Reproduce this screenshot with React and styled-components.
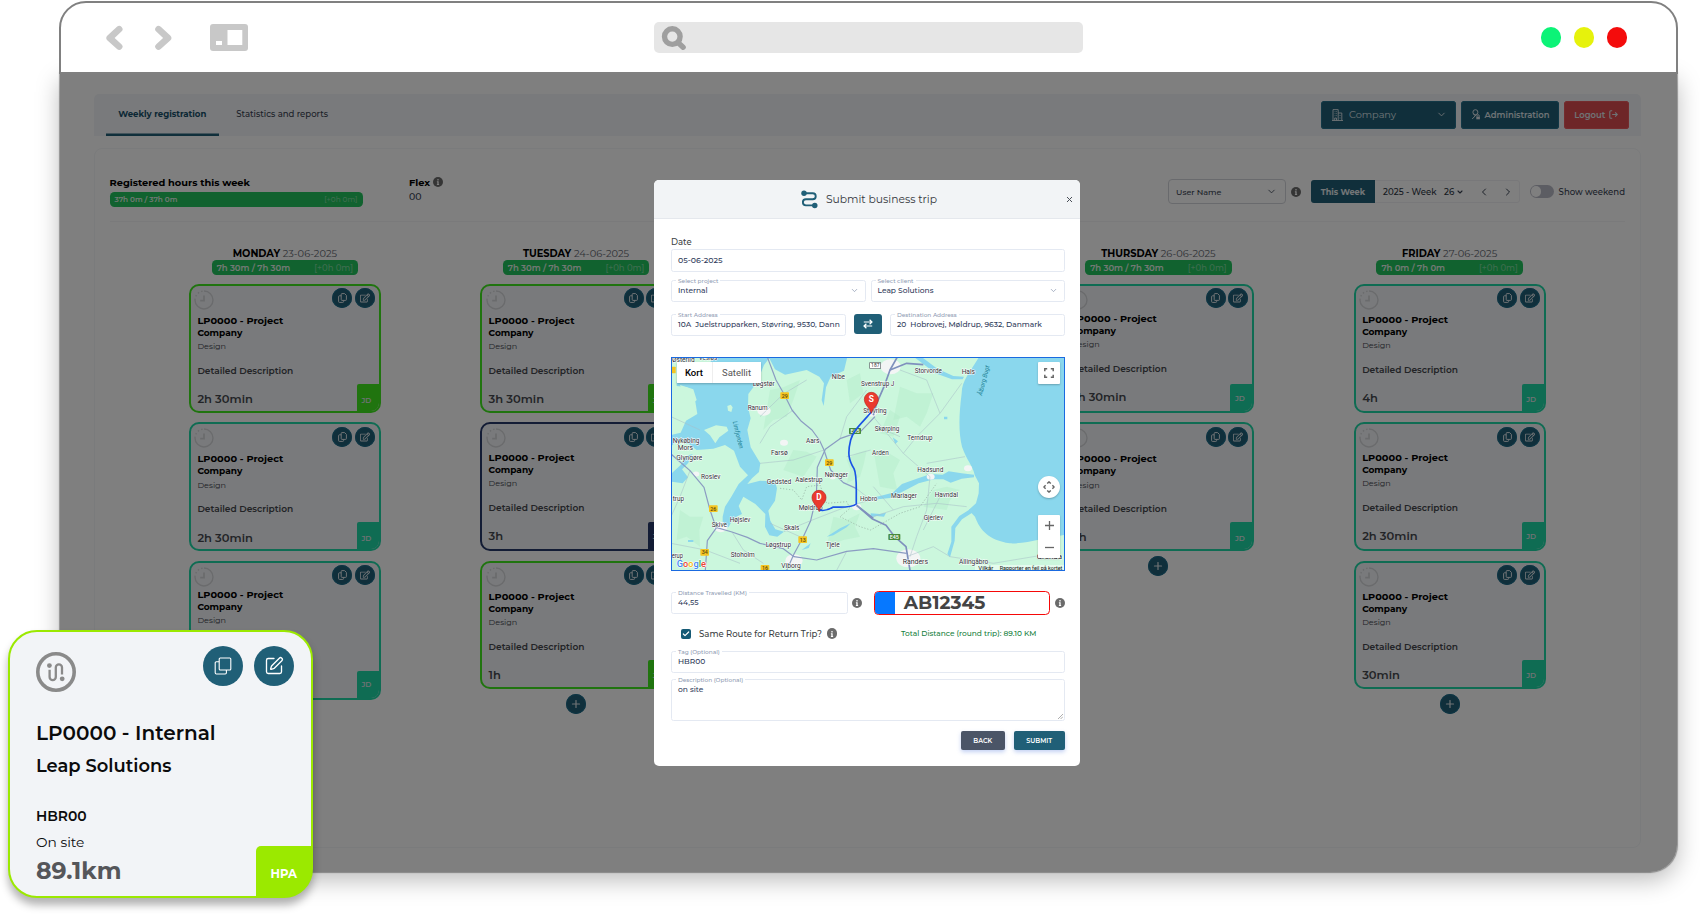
import React from 'react';
import styled, { createGlobalStyle, css } from 'styled-components';
import { FaRegEdit, FaInfo } from 'react-icons/fa';
import { ChevronDown, ChevronLeft, ChevronRight, Plus, SquarePen, Check } from 'lucide-react';

const teal = '#205f77';
const ink = '#3c3f44';

const GlobalStyle = createGlobalStyle`
  *, *::before, *::after { box-sizing: border-box; }
  body { margin: 0; background: #fff; font-family: Montserrat, Inter, "Open Sans", sans-serif; font-weight: 500; }
  svg { display: block; flex: none; }
`;

const Page = styled.main`
  position: relative;
  width: 1700px;
  height: 914px;
  overflow: hidden;
  padding: 1px 0 0 59px;
  white-space: nowrap;
`;

/* ---------- browser window ---------- */

const TitleBar = styled.header`
  position: relative;
  z-index: 1;
  width: 1619px;
  height: 73px;
  border: 2px solid #808080;
  border-radius: 27px 27px 0 0;
  background: #fff;
  display: grid;
  grid-template-columns: 593px 429px 1fr;
  align-items: center;
  padding-bottom: 0;
`;

const BrowserNav = styled.div`
  display: flex;
  align-items: center;
  padding-left: 45px;
`;

const SearchBar = styled.div`
  height: 31px;
  border-radius: 5px;
  background: #e6e6e6;
  display: flex;
  align-items: center;
  padding-left: 7px;
`;

const Dots = styled.div`
  display: flex;
  justify-content: flex-end;
  gap: 12.6px;
  padding-right: 49.3px;
`;

const Dot = styled.i`
  width: 20.2px;
  height: 20.2px;
  border-radius: 50%;
  background: ${p => p.$color};
`;

const Body = styled.section`
  position: relative;
  width: 1617px;
  height: 799px;
  margin-left: 1px;
  margin-top: -1px;
  padding: 21px 36.5px 0 34px;
  border-radius: 0 0 27px 27px;
  background: #fff;
  box-shadow: 0 8px 24px rgba(0, 0, 0, 0.27), 0 0 1px 1px rgba(130, 130, 130, 0.7);
`;

const Backdrop = styled.div`
  position: absolute;
  inset: 0;
  border-radius: inherit;
  background: rgba(0, 0, 0, 0.5);
`;

/* ---------- application ---------- */

const AppBar = styled.nav`
  height: 42px;
  background: #f3f5f8;
  border-radius: 5px 5px 0 0;
  display: flex;
  align-items: center;
  padding: 0 12px;
`;

const Tab = styled.a`
  height: 100%;
  display: flex;
  align-items: center;
  padding: 0 12.2px 3px;
  margin-right: 5.5px;
  font-size: 8.55px;
  font-weight: ${p => (p.$active ? 700 : 500)};
  color: ${p => (p.$active ? '#17506a' : '#374151')};
  box-shadow: ${p => (p.$active ? `inset 0 -2.5px 0 ${teal}` : 'none')};
`;

const AppButtons = styled.div`
  margin-left: auto;
  display: flex;
  gap: 5px;
`;

const AppButton = styled.button`
  width: ${p => p.$w}px;
  height: 28px;
  border: 0;
  border-radius: 3.5px;
  background: ${p => (p.$danger ? '#dd4c50' : teal)};
  box-shadow: inset 0 0 0 1px ${p => (p.$danger ? '#e8585c' : '#24708c')};
  color: #dfe5ea;
  font-family: inherit;
  font-size: ${p => (p.$large ? 9.73 : 8.42)}px;
  font-weight: ${p => (p.$large ? 450 : 600)};
  display: flex;
  align-items: center;
  justify-content: ${p => (p.$large ? 'flex-start' : 'center')};
  gap: ${p => (p.$large ? 6.5 : 4)}px;
  padding: 0 ${p => (p.$large ? 9.5 : 0)}px 1px ${p => (p.$large ? 11 : 0)}px;
  & > svg:last-child { margin-left: ${p => (p.$large ? 'auto' : 0)}; }
`;

const Panel = styled.div`
  height: 700px;
  margin-top: 12px;
  border: 1px solid #f5f6f8;
  border-radius: 8px;
  padding: 0 14.5px;
`;

const Summary = styled.div`
  height: 73px;
  border-bottom: 1px solid #f4f5f7;
  display: flex;
  align-items: flex-start;
`;

const Stat = styled.div`
  width: ${p => p.$w}px;
  padding-top: 26.7px;
`;

const StatTitle = styled.h3`
  margin: 0;
  height: 13px;
  font-size: 9.8px;
  line-height: 13px;
  font-weight: 700;
  color: #000;
  display: flex;
  align-items: center;
  gap: 3px;
`;

const StatValue = styled.div`
  font-size: 9.4px;
  line-height: 14px;
  margin-top: 1.5px;
  color: #374151;
`;

const HoursPill = styled.div`
  width: ${p => p.$w}px;
  height: 14.7px;
  margin-top: ${p => p.$top}px;
  padding: 0 5px;
  border-radius: 4.5px;
  background: #22c55e;
  font-size: ${p => p.$size}px;
  font-weight: 600;
  color: #e6f3ea;
  display: flex;
  align-items: center;
  justify-content: space-between;
`;

const PillDelta = styled.span`
  font-weight: 500;
  color: #7ddb9e;
`;

const InfoDot = styled.span`
  width: ${p => p.$s || 10}px;
  height: ${p => p.$s || 10}px;
  border-radius: 50%;
  background: #6b6b6b;
  color: #fff;
  display: flex;
  align-items: center;
  justify-content: center;
  flex: none;
`;

const Controls = styled.div`
  margin-left: auto;
  height: 24px;
  margin-top: 30.7px;
  display: flex;
  align-items: center;
`;

const UserSelect = styled.div`
  width: 118px;
  height: 25px;
  border: 1px solid #d3d5da;
  border-radius: 4px;
  padding: 0 8px 0 7px;
  font-size: 8.03px;
  color: #374151;
  display: flex;
  align-items: center;
  justify-content: space-between;
  margin-right: 4.5px;
`;

const WeekPicker = styled.div`
  width: 209.5px;
  height: 23.5px;
  margin: 0 9.5px 0 10px;
  border: 1px solid #f0f1f4;
  border-radius: 3px;
  display: flex;
  align-items: center;
  font-size: 8.6px;
  color: #2b3441;
  & > svg { color: #374151; }
`;

const ThisWeek = styled.b`
  width: 64.5px;
  height: 23.5px;
  margin-left: -1px;
  border-radius: 3px 0 0 3px;
  background: ${teal};
  color: #e6ebee;
  font-size: 8.17px;
  display: flex;
  align-items: center;
  justify-content: center;
`;

const WeekText = styled.span`
  margin-left: ${p => p.$gap}px;
`;

const Toggle = styled.span`
  width: 24.5px;
  height: 12.4px;
  border-radius: 7px;
  background: #b9bac6;
  padding: 1px;
  margin-right: 4.5px;
  &::after {
    content: '';
    display: block;
    width: 10.4px;
    height: 10.4px;
    border-radius: 50%;
    background: #fff;
  }
`;

const ToggleLabel = styled.span`
  font-size: 8.56px;
  color: #374151;
`;

const Week = styled.div`
  display: grid;
  grid-template-columns: repeat(5, 291.2px);
  justify-content: center;
  padding-top: 23.6px;
`;

const Day = styled.section`
  display: flex;
  flex-direction: column;
  align-items: center;
`;

const DayTitle = styled.h4`
  margin: 0;
  font-size: 9.85px;
  line-height: 14px;
  font-weight: 400;
  color: #62666e;
  b { color: #000; font-weight: 700; }
`;

const Cards = styled.div`
  margin-top: 9px;
  display: flex;
  flex-direction: column;
  align-items: center;
  gap: 9.8px;
`;

const Card = styled.article`
  position: relative;
  width: 192px;
  height: ${p => (p.$tall ? 138.9 : 128.6)}px;
  border: 2px solid ${p => p.$color};
  border-radius: 10px;
  background: #f3f5f8;
  overflow: hidden;
  padding: 1.5px 4px 0 3.5px;
`;

const CardTop = styled.div`
  height: 22px;
  display: flex;
  align-items: center;
  & > svg { margin: 3px auto 0 0; }
`;

const RoundButton = styled.span`
  width: 20px;
  height: 20px;
  margin-left: 2.5px;
  border-radius: 50%;
  background: ${teal};
  box-shadow: inset 0 0 0 1px #1d6d8b;
  color: #e0e6ea;
  display: flex;
  align-items: center;
  justify-content: center;
`;

const CardText = styled.div`
  padding-left: 3px;
  margin-top: ${p => 4.3 + p.$shift}px;
`;

const line = css`
  margin: 0;
  height: 12px;
  line-height: 12px;
`;
const CardTitle = styled.h5`${line} font-size: 9.8px; font-weight: 700; color: #000;`;
const CardClient = styled.div`${line} font-size: 9px; font-weight: 700; color: #000;`;
const CardTask = styled.div`${line} margin-top: 1.3px; font-size: 8.1px; font-weight: 400; color: #3f444c;`;
const CardNote = styled.div`${line} margin-top: 12.7px; font-size: 9.05px; font-weight: 600; color: #46494f;`;
const CardTime = styled.div`${line} margin-top: 16.1px; font-size: 11.5px; font-weight: 600; color: #46494f;`;

const CardTag = styled.span`
  position: absolute;
  right: -1px;
  bottom: -1px;
  width: 23px;
  height: 28px;
  border-radius: 2px 0 0 0;
  background: ${p => p.$color};
  color: #dfe5e8;
  font-size: 7.3px;
  font-weight: 600;
  line-height: 9px;
  text-align: center;
  padding: ${p => 11 + p.$shift}px 4px 0 0;
`;

const AddButton = styled(RoundButton)`
  margin: -5px 0 0;
`;

/* ---------- modal ---------- */

const Modal = styled.div`
  position: absolute;
  left: 594px;
  top: 107px;
  width: 426px;
  height: 586px;
  border-radius: 5px;
  background: #fff;
  overflow: hidden;
  color: ${ink};
`;

const ModalHeader = styled.header`
  height: 39px;
  background: #f2f4f6;
  border-bottom: 1px solid #e5e8ed;
  display: grid;
  grid-template-columns: 148px 1fr auto;
  align-items: center;
  padding: 0 7px 0 0;
  & > svg:first-child { justify-self: end; }
  h2 { margin: 0; padding-left: 24px; font-size: 10.75px; font-weight: 450; color: #34373c; }
`;

const ModalIcon = styled.svg`
  margin-right: -16px;
`;

const Form = styled.div`
  padding: 18px 15px 0 17px;
`;

const DateLabel = styled.label`
  display: block;
  font-size: 8.5px;
  line-height: 11px;
  margin-bottom: 1.3px;
`;

const FormRow = styled.div`
  display: flex;
  align-items: ${p => (p.$center ? 'center' : 'flex-start')};
  justify-content: space-between;
  margin-top: ${p => p.$top}px;
`;

const Field = styled.div`
  position: relative;
  width: ${p => (p.$w ? `${p.$w}px` : '100%')};
  height: ${p => p.$h || 22}px;
  border: 1px solid #e4e9f2;
  border-radius: 2.5px;
  padding: ${p => (p.$label ? 0 : 0.5)}px 6px 1px;
  font-size: ${p => p.$size || 7.5}px;
  line-height: 19.5px;
  color: #2e3a59;
  display: flex;
  align-items: ${p => (p.$area ? 'flex-start' : 'center')};
  justify-content: space-between;
  white-space: pre;
  & > svg { color: #8f9bb3; }
`;

const FieldLabel = styled.span`
  position: absolute;
  left: 4px;
  top: -4px;
  padding: 0 2px;
  background: #fff;
  font-size: 5.8px;
  line-height: 7px;
  color: #8f9bb3;
`;

const SwapButton = styled.span`
  width: 28px;
  height: 20px;
  border-radius: 3px;
  background: ${teal};
  color: #fff;
  display: flex;
  align-items: center;
  justify-content: center;
`;

const MapBox = styled.div`
  position: relative;
  width: 394px;
  height: 214px;
  margin-top: 20.7px;
  border: 1px solid #1a6ae0;
  overflow: hidden;
  font-family: Roboto, sans-serif;
  & > svg { margin: -1px; }
`;

const MapTypes = styled.div`
  position: absolute;
  left: 4.5px;
  top: 4px;
  height: 21px;
  width: 84px;
  background: #fff;
  box-shadow: 0 1px 2px rgba(0, 0, 0, 0.25);
  display: grid;
  grid-template-columns: 36px 1fr;
  align-items: center;
  text-align: center;
  font-size: 9.5px;
  font-weight: 400;
  color: #565656;
  b { font-weight: 500; color: #000; border-right: 1px solid #eee; line-height: 21px; }
`;

const MapButton = styled.div`
  position: absolute;
  left: 366px;
  top: ${p => p.$top}px;
  width: 22px;
  height: ${p => p.$h || 22}px;
  border-radius: ${p => (p.$round ? '50%' : '1px')};
  background: #fff;
  box-shadow: 0 1px 2px rgba(0, 0, 0, 0.25);
  color: #666;
  display: flex;
  flex-direction: column;
  align-items: center;
  justify-content: space-around;
`;

const PlateField = styled.div`
  width: 176px;
  height: 24.5px;
  border: 1.5px solid #f60808;
  border-radius: 4.5px;
  overflow: hidden;
  display: flex;
  align-items: center;
  font-size: 18.6px;
  font-weight: 700;
  line-height: 22px;
  color: #444;
  &::before { content: ''; width: 20.5px; height: 100%; background: #0678ff; margin-right: 8.7px; }
`;

const Gap = styled.span`
  flex: 0 0 ${p => p.$w}px;
`;

const CheckRow = styled.div`
  height: 12px;
  margin-top: 12.4px;
  display: flex;
  align-items: center;
  padding-left: 9.5px;
  font-size: 8.55px;
`;

const Checkbox = styled.span`
  width: 10px;
  height: 10px;
  margin-right: 8.5px;
  border-radius: 2px;
  background: #155a75;
  color: #fff;
  display: flex;
  align-items: center;
  justify-content: center;
`;

const Total = styled.span`
  margin-left: auto;
  margin-right: 28.5px;
  font-size: 7.46px;
  color: #15803d;
`;

const Actions = styled.div`
  display: flex;
  justify-content: flex-end;
  gap: 8.5px;
  margin-top: 10.2px;
`;

const Action = styled.button`
  width: ${p => p.$w}px;
  height: 19.3px;
  border: 0;
  border-radius: 2px;
  background: ${p => p.$bg};
  box-shadow: 0 2px 4px rgba(80, 120, 220, 0.35);
  color: #fff;
  font-family: inherit;
  font-size: 6.4px;
  font-weight: 600;
  padding: 0.6px 0 0;
`;

/* ---------- trip card ---------- */

const TripCard = styled.aside`
  position: absolute;
  z-index: 2;
  left: 8px;
  top: 630px;
  width: 305px;
  height: 268px;
  border: 2px solid #9be900;
  border-radius: 29px;
  background: #f2f4f7;
  box-shadow: 0 7px 8px rgba(0, 0, 0, 0.3);
  padding: 14px 17.5px 0 26px;
  color: #000;
`;

const TripTop = styled.div`
  height: 46px;
  display: flex;
  align-items: flex-start;
  gap: 10.5px;
  & > svg { margin: 5.5px auto 0 0; }
`;

const TripButton = styled.span`
  width: 40px;
  height: 40px;
  border-radius: 50%;
  background: ${teal};
  color: #fff;
  display: flex;
  align-items: center;
  justify-content: center;
`;

const TripLine = styled.div`
  margin-top: ${p => p.$top}px;
  height: 24px;
  line-height: 24px;
  font-size: ${p => p.$size}px;
  font-weight: ${p => p.$weight};
  color: ${p => p.$color || '#0b0b0c'};
`;

const TripTag = styled.span`
  position: absolute;
  right: -1px;
  bottom: -1px;
  width: 56.5px;
  height: 51px;
  border-radius: 5px 0 28px 0;
  background: #9be900;
  color: #fff;
  font-size: 11.7px;
  font-weight: 700;
  line-height: 14px;
  text-align: center;
  padding: 21px 0 0 0;
`;

/* ---------- drawings ---------- */

const ClockIcon = () => (
  <svg width="20" height="20" viewBox="0 0 20 20" fill="none" stroke="#d5d7da" strokeWidth="1.4">
    <path d="M10 1a9 9 0 1 1-9 9" />
    <path d="M1 10a9 9 0 0 1 9-9" strokeDasharray="1.5 2.2" />
    <path d="M10 5.5v5.2H6.2" strokeWidth="1.8" />
  </svg>
);

const CopyIcon = () => (
  <svg width="9" height="10" viewBox="0 0 9 10" fill="none" stroke="currentColor" strokeWidth="1">
    <path d="M4 .6h2.6L8.4 2.4v4.2q0 .8-.8.8H4q-.8 0-.8-.8V1.4Q3.2.6 4 .6Z" />
    <path d="M3.2 2.8H1.4q-.8 0-.8.8v5q0 .8.8.8h3.4q.8 0 .8-.8V7.4" />
  </svg>
);

const MagnifierIcon = () => (
  <svg width="26" height="26" viewBox="0 0 26 26" fill="none" stroke="#9f9f9f">
    <circle cx="11.3" cy="11.6" r="7.8" strokeWidth="5.4" />
    <path d="M17.5 18l4.6 4.2" strokeWidth="5.4" strokeLinecap="round" />
  </svg>
);

const NavArrow = ({ flip, gap }) => (
  <svg width={17 + gap} height="26" viewBox={`0 0 ${17 + gap} 26`} fill="none" stroke="#c8c8c8" strokeWidth="6.6" strokeLinecap="round" strokeLinejoin="round">
    <path d={flip ? 'M4.5 4.2L14 13L4.5 21.6' : 'M13.2 4.2L3.7 13L13.2 21.6'} />
  </svg>
);

const SidebarIcon = () => (
  <svg width="38" height="27" viewBox="0 0 38 27">
    <rect width="38" height="27" rx="3" fill="#c8c8c8" />
    <rect x="17.5" y="6" width="14.8" height="15" fill="#fff" />
    <rect x="6" y="17" width="6" height="4" fill="#fff" />
  </svg>
);

const BuildingIcon = () => (
  <svg width="11" height="12" viewBox="0 0 11 12" fill="none" stroke="currentColor" strokeWidth="0.9">
    <path d="M0 11.5h11M1 11.5V.6h5.2v10.9M6.2 4h3.6v7.5M2.7 2.6h.7M4 2.6h.7M2.7 4.6h.7M4 4.6h.7M2.7 6.6h.7M4 6.6h.7M2.7 11.5V9h1.8v2.5M8 6v1M8 8.5v1" />
  </svg>
);

const AdminIcon = () => (
  <svg width="10" height="11" viewBox="0 0 10 11" fill="none" stroke="currentColor" strokeWidth="1">
    <circle cx="4.4" cy="3.2" r="2.5" />
    <path d="M5.8 5.2L1.2 10M2.6 5.2l1.6 1.6M6 7.6V6.8a1.1 1.1 0 0 1 2.2 0v.8" />
    <rect x="5.3" y="7.6" width="3.6" height="2.7" fill="currentColor" stroke="none" />
  </svg>
);

const LogoutIcon = () => (
  <svg width="9" height="9" viewBox="0 0 9 9" fill="none" stroke="currentColor" strokeWidth="1.1">
    <path d="M3.2.8H1.8Q.8.8.8 1.8v5.4q0 1 1 1h1.4M3.2 4.5h5M6.2 2.4l2.1 2.1-2.1 2.1" />
  </svg>
);

const RouteIcon = () => (
  <ModalIcon width="17" height="19" viewBox="0 0 18 20" fill="none" stroke={teal} strokeWidth="2">
    <path d="M4 3.4h8.4a3.1 3.1 0 0 1 0 6.4H5.2a3.2 3.2 0 0 0 0 6.4H14" />
    <circle cx="3.2" cy="3.4" r="2.9" fill={teal} stroke="none" />
    <circle cx="14.6" cy="16.4" r="2.9" fill={teal} stroke="none" />
  </ModalIcon>
);

const SwapIcon = () => (
  <svg width="10" height="10" viewBox="0 0 10 10" fill="none" stroke="currentColor" strokeWidth="1.2">
    <path d="M.8 3h8M6.6.7L9 3 6.6 5.3M9.2 7h-8M3.4 4.7L1 7l2.4 2.3" />
  </svg>
);

const TripRouteIcon = () => (
  <svg width="40" height="40" viewBox="0 0 40 40" fill="none" stroke="#8a8a8a">
    <circle cx="20" cy="20" r="18.2" strokeWidth="3.6" />
    <path d="M13.6 17.8v7.2a3.1 3.1 0 0 0 6.2 0V15.4a3.1 3.1 0 0 1 6.2 0V22.4" strokeWidth="2.3" />
    <circle cx="13.4" cy="13.6" r="2.4" fill="#8a8a8a" stroke="none" />
    <circle cx="26.2" cy="26.8" r="2.4" fill="#8a8a8a" stroke="none" />
  </svg>
);

const TripCopyIcon = () => (
  <svg width="18" height="18" viewBox="0 0 18 18" fill="none" stroke="currentColor" strokeWidth="1.1">
    <rect x="5.2" y="1" width="11.6" height="12" rx="1" />
    <path d="M5.2 4.8H2.4Q1.2 4.8 1.2 6v9.8Q1.2 17 2.4 17h8.8q1.2 0 1.2-1.2V13" />
  </svg>
);

/* Map drawing units: three per pixel. */
const WATER = [
  'M155 21L312 21L326 21L345 58L375 74L440 60L478 80L492 100L485 150L491 168L498 112L512 80L552 62L562 21L330 21L312 45L300 75L285 105L265 132L264 172L272 205L262 240L272 292L301 340L297 366L276 385L262 402L300 392L345 395L351 415L345 452L325 482L331 512L346 538L372 545L352 560L328 556L315 530L316 492L286 462L250 440L236 468L246 492L220 505L206 531L188 536L188 500L195 470L214 440L236 402L264 376L240 350L222 302L195 285L160 296L110 300L86 282L50 272L33 290L33 255L62 248L78 212L112 192L106 155L82 112L50 108L50 95L140 95Z',
  'M33 372L62 345L78 318L98 312L84 340L66 358L84 382L68 400L33 395Z',
  'M785 21L832 56L880 78L912 80L908 88L876 88L826 70L790 42L762 21Z',
  'M957 21C935 60 905 90 905 130C896 200 896 250 906 290C920 330 940 350 944 375L957 400L956 430L948 460L926 480L945 500C960 540 985 570 1050 580C1100 582 1160 562 1214 555L1214 21Z',
  'M942 374L905 370L866 364L848 374L812 372L770 386L726 402L698 428L660 438L632 444L632 450L690 444L742 418L776 400L822 388L850 388L872 398L905 386L942 382Z',
  'M936 474L898 498L874 530L874 575L862 612L870 622L884 572L886 534L906 508L940 486Z',
  'M632 490L660 492L678 488L672 500L650 498L632 502Z',
  'M698 262L714 274L706 282Z M852 200h10v8h-10Z M84 570h16v6h-16Z',
  'M500 560L540 535L572 520L560 532L520 556Z M425 600L452 580L446 594Z',
];
const ISLES = ['M132 240L168 226L200 230L205 242L178 262L166 280L150 256Z', 'M202 168l10-4 6 8-4 14-10-4Z', 'M60 105L100 118L110 150L92 168L76 150Z'];
const ROADS = [
  'M322 21L348 90L372 132L396 180L424 214L456 240L478 270L492 300L512 360L550 398L590 416',
  'M645 200L602 244L540 266L496 298L472 352L469 440L452 512L430 560L402 612L380 661',
  'M33 312L90 362L132 412L150 480L168 532L216 546L262 562L300 580L370 596L402 620L470 630L560 604L640 596L740 610',
  'M170 532L142 572L136 661',
];
const MINOR = [
  'M33 200L120 240M300 200L370 132L440 90M300 340L400 330L492 300M372 545L452 512L560 470L632 450M90 362L60 440L33 500M216 546L250 600L310 640',
  'M640 200L730 310L810 380M730 310L770 260L840 190L905 100M810 380L800 480L770 560M640 500L730 470L830 460L920 470M800 340L915 320M720 60L800 90L840 190M650 230L720 260',
  'M740 620L820 590L870 620L1000 640L1180 610M770 560L750 620M700 480L640 410M33 580L136 600L240 640M400 180L330 230L300 280M840 440L790 540',
  'M590 416L632 450M530 661L560 604M420 560L330 520M540 266L560 200L620 120M632 300L560 320',
];
const MOTORWAY = ['M712 21L690 60L672 110L650 160L640 196', 'M590 466L636 506L678 526L704 560L738 590L750 661', 'M690 60L740 40L790 44M640 505L590 466'];
const RELIEF = [
  'M560 330L590 310L620 300L612 340L600 380L560 400L572 360Z', 'M330 120L370 112L420 90L400 150L380 200L340 210L310 240Z', 'M640 300L680 305L720 330L700 370L712 420L660 410Z',
  'M400 300L440 305L470 320L450 350L430 380L370 360Z', 'M720 110L770 130L820 130L800 190L780 230L740 200L700 210Z', 'M820 420L860 410L900 420L870 450L860 480L790 470Z',
  'M520 500L560 510L600 490L585 530L600 560L550 570L500 590Z', 'M60 480L90 500L130 500L118 540L120 590L80 560L50 570Z', 'M690 180L720 200L700 260L660 250Z', 'M560 90L600 70L610 130L570 160Z',
];
const TOWNS = [[312, 182, 20], [372, 278, 12], [182, 532, 20], [402, 632, 26], [692, 50, 30], [636, 190, 14], [590, 470, 14], [745, 625, 36], [812, 380, 12], [108, 372, 10], [924, 355, 12], [518, 382, 9]];
const LABELS = [
  ['Østerild', 36, 37, 68], ['Vesløs', 116, 31, 56], ['Løgstør', 278, 108, 66], ['Ranum', 263, 179, 60], ['Nibe', 515, 88, 40], ['Svenstrup J', 603, 109, 100], ['Støvring', 610, 189, 70],
  ['Nykøbing', 38, 279, 80], ['Mors', 53, 299, 46], ['Glyngøre', 49, 329, 78], ['Aars', 438, 279, 40], ['Farsø', 333, 314, 50], ['Skørping', 644, 243, 74],
  ['Roslev', 123, 387, 58], ['Gedsted', 320, 401, 74], ['Aalestrup', 406, 396, 82], ['Nørager', 494, 382, 70], ['Arden', 636, 316, 50], ['Terndrup', 742, 270, 76],
  ['trup', 38, 454, 34], ['Højslev', 209, 515, 62], ['Skive', 155, 532, 46], ['Møldrup', 416, 480, 72], ['Hobro', 600, 454, 52], ['Skals', 372, 541, 46],
  ['Løgstrup', 317, 592, 76], ['Tjele', 497, 590, 42], ['Stoholm', 212, 620, 72], ['Viborg', 364, 653, 58], ['erup', 35, 624, 34], ['Storvorde', 764, 69, 82], ['Hals', 905, 72, 40],
  ['Hadsund', 772, 367, 78], ['Mariager', 693, 443, 78], ['Havndal', 824, 440, 70], ['Gjerlev', 791, 509, 58], ['Randers', 728, 643, 76], ['Allingåbro', 897, 641, 88], ['Grenaa', 1130, 626, 76],
];
const SHIELDS = [['29', 374, 137], ['29', 508, 338], ['26', 160, 476], ['13', 428, 569], ['34', 134, 607], ['16', 315, 655]];

const Pin = ({ x, y, letter }) => (
  <g transform={`translate(${x} ${y})`}>
    <path d="M0 42C-3 26-21 18-21 0A21 21 0 0 1 21 0C21 18 3 26 0 42Z" fill="#ea3a2e" stroke="#b9261d" strokeWidth="2" />
    <text y="9" textAnchor="middle" fontSize="25" fontWeight="700" fill="#fff">{letter}</text>
  </g>
);

const TripMap = () => (
  <svg width="394" height="214" viewBox="33 21 1182 642" fontFamily="Roboto, sans-serif" fontWeight="400">
    <rect x="33" y="21" width="1182" height="642" fill="#cbf7dd" />
    {RELIEF.map(d => <path key={d} d={d} fill="#b4eac9" opacity="0.45" />)}
    {WATER.map(d => <path key={d} d={d} fill="#8ad7ed" strokeLinejoin="round" />)}
    {ISLES.map(d => <path key={d} d={d} fill="#cbf7dd" />)}
    <g fill="#f3f5f5">{TOWNS.map(([x, y, r]) => <ellipse key={`${x}-${y}`} cx={x} cy={y} rx={r} ry={r * 0.75} />)}</g>
    <g fill="none" stroke="#a9c0c9" strokeWidth="2" opacity="0.8">{MINOR.map(d => <path key={d} d={d} />)}</g>
    <path d="M360 415L400 420L425 450L440 410L480 405L500 460L560 455L570 475L540 500L600 530L632 540L720 490L780 470L830 400" fill="none" stroke="#93ac9f" strokeWidth="2" strokeDasharray="4 5" />
    <g fill="none" stroke="#8b9cc2" strokeWidth="3.6" strokeLinejoin="round">{ROADS.map(d => <path key={d} d={d} />)}</g>
    <g fill="none" stroke="#7f90bd" strokeWidth="5" strokeLinejoin="round">{MOTORWAY.map(d => <path key={d} d={d} />)}</g>
    <rect x="33" y="50" width="14" height="20" rx="2" fill="#f5c521" />
    {SHIELDS.map(([n, x, y]) => (
      <g key={`${x}-${y}`}>
        <rect x={x - 13} y={y - 10} width="26" height="20" rx="2" fill="#f5c521" />
        <text x={x} y={y + 6} textAnchor="middle" fontSize="16" fontWeight="500" fill="#5c4a10">{n}</text>
      </g>
    ))}
    {[[585, 243], [703, 561]].map(([x, y]) => (
      <g key={x}>
        <rect x={x - 18} y={y - 9} width="36" height="18" rx="2" fill="#478a3c" />
        <text x={x} y={y + 6} textAnchor="middle" fontSize="16" fontWeight="500" fill="#fff">E45</text>
      </g>
    ))}
    <rect x="629" y="38" width="33" height="17" fill="#fff" stroke="#5f6368" strokeWidth="2" />
    <text x="646" y="52" textAnchor="middle" fontSize="15" fill="#333">187</text>
    <g fontSize="20" fill="#2d3136" stroke="#fff" strokeWidth="3" paintOrder="stroke" fontWeight="400">
      {LABELS.map(([t, x, y, w]) => <text key={t} x={x} y={y} textLength={w} lengthAdjust="spacingAndGlyphs">{t}</text>)}
    </g>
    <text transform="translate(218 215) rotate(76)" fontSize="19" fontStyle="italic" fill="#1b8093" textLength="84" lengthAdjust="spacingAndGlyphs">Limfjorden</text>
    <text transform="translate(966 138) rotate(-76)" fontSize="19" fontStyle="italic" fill="#1b8093" textLength="92" lengthAdjust="spacingAndGlyphs">Ålborg Bugt</text>
    <path d="M634 186C605 220 580 240 572 270C562 310 566 330 582 356C592 376 588 420 589 462C578 472 545 472 520 471C500 484 488 482 477 480" fill="none" stroke="#1953e6" strokeWidth="5" />
    <Pin x={634} y={148} letter="S" />
    <Pin x={477} y={442} letter="D" />
    <g fontSize="28" fontWeight="500" stroke="#fff" strokeWidth="3" paintOrder="stroke">
      <text x="50" y="652" textLength="88" lengthAdjust="spacingAndGlyphs"><tspan fill="#4285f4">G</tspan><tspan fill="#ea4335">o</tspan><tspan fill="#fbbc05">o</tspan><tspan fill="#4285f4">g</tspan><tspan fill="#34a853">l</tspan><tspan fill="#ea4335">e</tspan></text>
    </g>
    <rect x="945" y="645" width="270" height="18" fill="#fff" opacity="0.5" />
    <g fontSize="16" fill="#111">
      <text x="955" y="659" textLength="45" lengthAdjust="spacingAndGlyphs">Vilkår</text>
      <text x="1019" y="659" textLength="188" lengthAdjust="spacingAndGlyphs">Rapporter en fejl på kortet</text>
    </g>
  </svg>
);

/* ---------- data ---------- */

const GREEN = '#40e81f';
const MINT = '#1fd8a6';
const NAVY = '#26386a';

const DAYS = [
  { name: 'MONDAY', date: '23-06-2025', hours: '7h 30m / 7h 30m', cards: [
    { color: GREEN, time: '2h 30min', shift: 1.3 },
    { color: MINT, time: '2h 30min', shift: 1.3 },
    { color: MINT, shift: -2, tall: true },
  ] },
  { name: 'TUESDAY', date: '24-06-2025', hours: '7h 30m / 7h 30m', add: true, cards: [
    { color: GREEN, time: '3h 30min', shift: 1 },
    { color: NAVY, time: '3h', shift: -0.6 },
    { color: GREEN, time: '1h', shift: 0 },
  ] },
  null,
  { name: 'THURSDAY', date: '26-06-2025', hours: '7h 30m / 7h 30m', add: true, cards: [
    { color: MINT, time: '3h 30min', shift: -1 },
    { color: MINT, time: '4h', shift: 1.2 },
  ] },
  { name: 'FRIDAY', date: '27-06-2025', hours: '7h 0m / 7h 0m', add: true, cards: [
    { color: MINT, time: '4h', shift: 0 },
    { color: MINT, time: '2h 30min', shift: -0.6 },
    { color: MINT, time: '30min', shift: 0 },
  ] },
];

const Info = ({ size }) => <InfoDot $s={size}><FaInfo size={6} /></InfoDot>;

const EntryCard = ({ color, time, shift, tall }) => (
  <Card $color={color} $tall={tall}>
    <CardTop>
      <ClockIcon />
      <RoundButton><CopyIcon /></RoundButton>
      <RoundButton><FaRegEdit size={10} /></RoundButton>
    </CardTop>
    <CardText $shift={shift}>
      <CardTitle>LP0000 - Project</CardTitle>
      <CardClient>Company</CardClient>
      <CardTask>Design</CardTask>
      {time && <CardNote>Detailed Description</CardNote>}
      {time && <CardTime>{time}</CardTime>}
    </CardText>
    <CardTag $color={color} $shift={shift}>JD</CardTag>
  </Card>
);

const DayColumn = ({ day }) => (
  <Day>
    <DayTitle><b>{day.name}</b> {day.date}</DayTitle>
    <HoursPill $w={146.5} $top={0.7} $size={8.47}>{day.hours}<PillDelta>[+0h 0m]</PillDelta></HoursPill>
    <Cards>
      {day.cards.map((c, i) => <EntryCard key={i} {...c} />)}
      {day.add && <AddButton><Plus size={12} strokeWidth={2.4} /></AddButton>}
    </Cards>
  </Day>
);

const TripModal = () => (
  <Modal>
    <ModalHeader>
      <RouteIcon />
      <h2>Submit business trip</h2>
      <svg width="7" height="7" viewBox="0 0 7 7" stroke="#4a4f58" strokeWidth="1"><path d="M1 1l5 5M6 1L1 6" /></svg>
    </ModalHeader>
    <Form>
      <DateLabel>Date</DateLabel>
      <Field $h={22.7} $size={7.85}>05-06-2025</Field>
      <FormRow $top={8.5}>
        <Field $w={194.5} $label>
          <FieldLabel>Select project</FieldLabel>Internal<ChevronDown size={9} />
        </Field>
        <Field $w={194.5} $label>
          <FieldLabel>Select client</FieldLabel>Leap Solutions<ChevronDown size={9} />
        </Field>
      </FormRow>
      <FormRow $top={12}>
        <Field $w={175} $label>
          <FieldLabel>Start Address</FieldLabel>10A  Juelstrupparken, Støvring, 9530, Dann
        </Field>
        <SwapButton><SwapIcon /></SwapButton>
        <Field $w={175} $label>
          <FieldLabel>Destination Address</FieldLabel>20  Hobrovej, Møldrup, 9632, Danmark
        </Field>
      </FormRow>
      <MapBox>
        <TripMap />
        <MapTypes><b>Kort</b><span>Satellit</span></MapTypes>
        <MapButton $top={4}>
          <svg width="10" height="10" viewBox="0 0 10 10" fill="none" stroke="currentColor" strokeWidth="1.5"><path d="M.8 3.2V.8h2.4M6.8.8h2.4v2.4M9.2 6.8v2.4H6.8M3.2 9.2H.8V6.8" /></svg>
        </MapButton>
        <MapButton $top={118} $round>
          <svg width="12" height="12" viewBox="0 0 12 12" fill="none" stroke="currentColor" strokeWidth="1.4"><path d="M4.2 2.6L6 .9l1.8 1.7M9.4 4.2L11.1 6 9.4 7.8M7.8 9.4L6 11.1 4.2 9.4M2.6 7.8L.9 6l1.7-1.8" /></svg>
        </MapButton>
        <MapButton $top={156.5} $h={43.5}>
          <svg width="9" height="9" viewBox="0 0 9 9" stroke="currentColor" strokeWidth="1.3"><path d="M4.5 0v9M0 4.5h9" /></svg>
          <svg width="9" height="9" viewBox="0 0 9 9" stroke="currentColor" strokeWidth="1.3"><path d="M0 4.5h9" /></svg>
        </MapButton>
      </MapBox>
      <FormRow $top={19.6} $center>
        <Field $w={176.5} $label>
          <FieldLabel>Distance Travelled (KM)</FieldLabel>44,55
        </Field>
        <Gap $w={4} />
        <Info size={10.5} />
        <Gap $w={11.5} />
        <PlateField>AB12345</PlateField>
        <Gap $w={5} />
        <Info size={10.5} />
      </FormRow>
      <CheckRow>
        <Checkbox><Check size={8} strokeWidth={3.6} /></Checkbox>
        Same Route for Return Trip?
        <Gap $w={4.5} />
        <Info size={10.5} />
        <Total>Total Distance (round trip): 89.10 KM</Total>
      </CheckRow>
      <FormRow $top={11.2}>
        <Field $h={22} $label><FieldLabel>Tag (Optional)</FieldLabel>HBR00</Field>
      </FormRow>
      <FormRow $top={6}>
        <Field $h={42} $label $area>
          <FieldLabel>Description (Optional)</FieldLabel>on site
          <svg width="5" height="39" viewBox="0 0 5 39" stroke="#777" strokeWidth="0.6" transform="translate(5 0)"><path d="M0 39l5-5M2.6 39L5 36.6" /></svg>
        </Field>
      </FormRow>
      <Actions>
        <Action $w={44.5} $bg="#4b5567">BACK</Action>
        <Action $w={51.5} $bg={teal}>SUBMIT</Action>
      </Actions>
    </Form>
  </Modal>
);

export default function App() {
  return (
    <Page>
      <GlobalStyle />
      <TitleBar>
        <BrowserNav>
          <NavArrow gap={31} />
          <NavArrow flip gap={39} />
          <SidebarIcon />
        </BrowserNav>
        <SearchBar><MagnifierIcon /></SearchBar>
        <Dots>
          <Dot $color="#0cf377" />
          <Dot $color="#e6f20c" />
          <Dot $color="#f40c0c" />
        </Dots>
      </TitleBar>
      <Body>
        <AppBar>
          <Tab $active>Weekly registration</Tab>
          <Tab>Statistics and reports</Tab>
          <AppButtons>
            <AppButton $w={135.5} $large><BuildingIcon />Company<ChevronDown size={11} strokeWidth={2} /></AppButton>
            <AppButton $w={98}><AdminIcon />Administration</AppButton>
            <AppButton $w={64.5} $danger>Logout<LogoutIcon /></AppButton>
          </AppButtons>
        </AppBar>
        <Panel>
          <Summary>
            <Stat $w={299.5}>
              <StatTitle>Registered hours this week</StatTitle>
              <HoursPill $w={253} $top={3.4} $size={7.27}>37h 0m / 37h 0m<PillDelta>[+0h 0m]</PillDelta></HoursPill>
            </Stat>
            <Stat $w={60}>
              <StatTitle>Flex <Info /></StatTitle>
              <StatValue>00</StatValue>
            </Stat>
            <Controls>
              <UserSelect>User Name<ChevronDown size={11} strokeWidth={1.8} /></UserSelect>
              <Info />
              <WeekPicker>
                <ThisWeek>This Week</ThisWeek>
                <WeekText $gap={8}>2025 - Week</WeekText>
                <WeekText $gap={7.5}>26</WeekText>
                <Gap $w={2} />
                <ChevronDown size={8} strokeWidth={3.4} />
                <Gap $w={14} />
                <ChevronLeft size={12} strokeWidth={2} />
                <Gap $w={12} />
                <ChevronRight size={12} strokeWidth={2} />
              </WeekPicker>
              <Toggle />
              <ToggleLabel>Show weekend</ToggleLabel>
            </Controls>
          </Summary>
          <Week>
            {DAYS.map((day, i) => (day ? <DayColumn key={day.name} day={day} /> : <Day key={i} />))}
          </Week>
        </Panel>
        <Backdrop />
        <TripModal />
      </Body>
      <TripCard>
        <TripTop>
          <TripRouteIcon />
          <TripButton><TripCopyIcon /></TripButton>
          <TripButton><SquarePen size={20} strokeWidth={1.6} /></TripButton>
        </TripTop>
        <TripLine $top={28.8} $size={20} $weight={600}>LP0000 - Internal</TripLine>
        <TripLine $top={9} $size={17.9} $weight={600}>Leap Solutions</TripLine>
        <TripLine $top={26.5} $size={13.9} $weight={600}>HBR00</TripLine>
        <TripLine $top={2} $size={13.75} $weight={400}>On site</TripLine>
        <TripLine $top={4.5} $size={23.6} $weight={700} $color="#55565a">89.1km</TripLine>
        <TripTag>HPA</TripTag>
      </TripCard>
    </Page>
  );
}
